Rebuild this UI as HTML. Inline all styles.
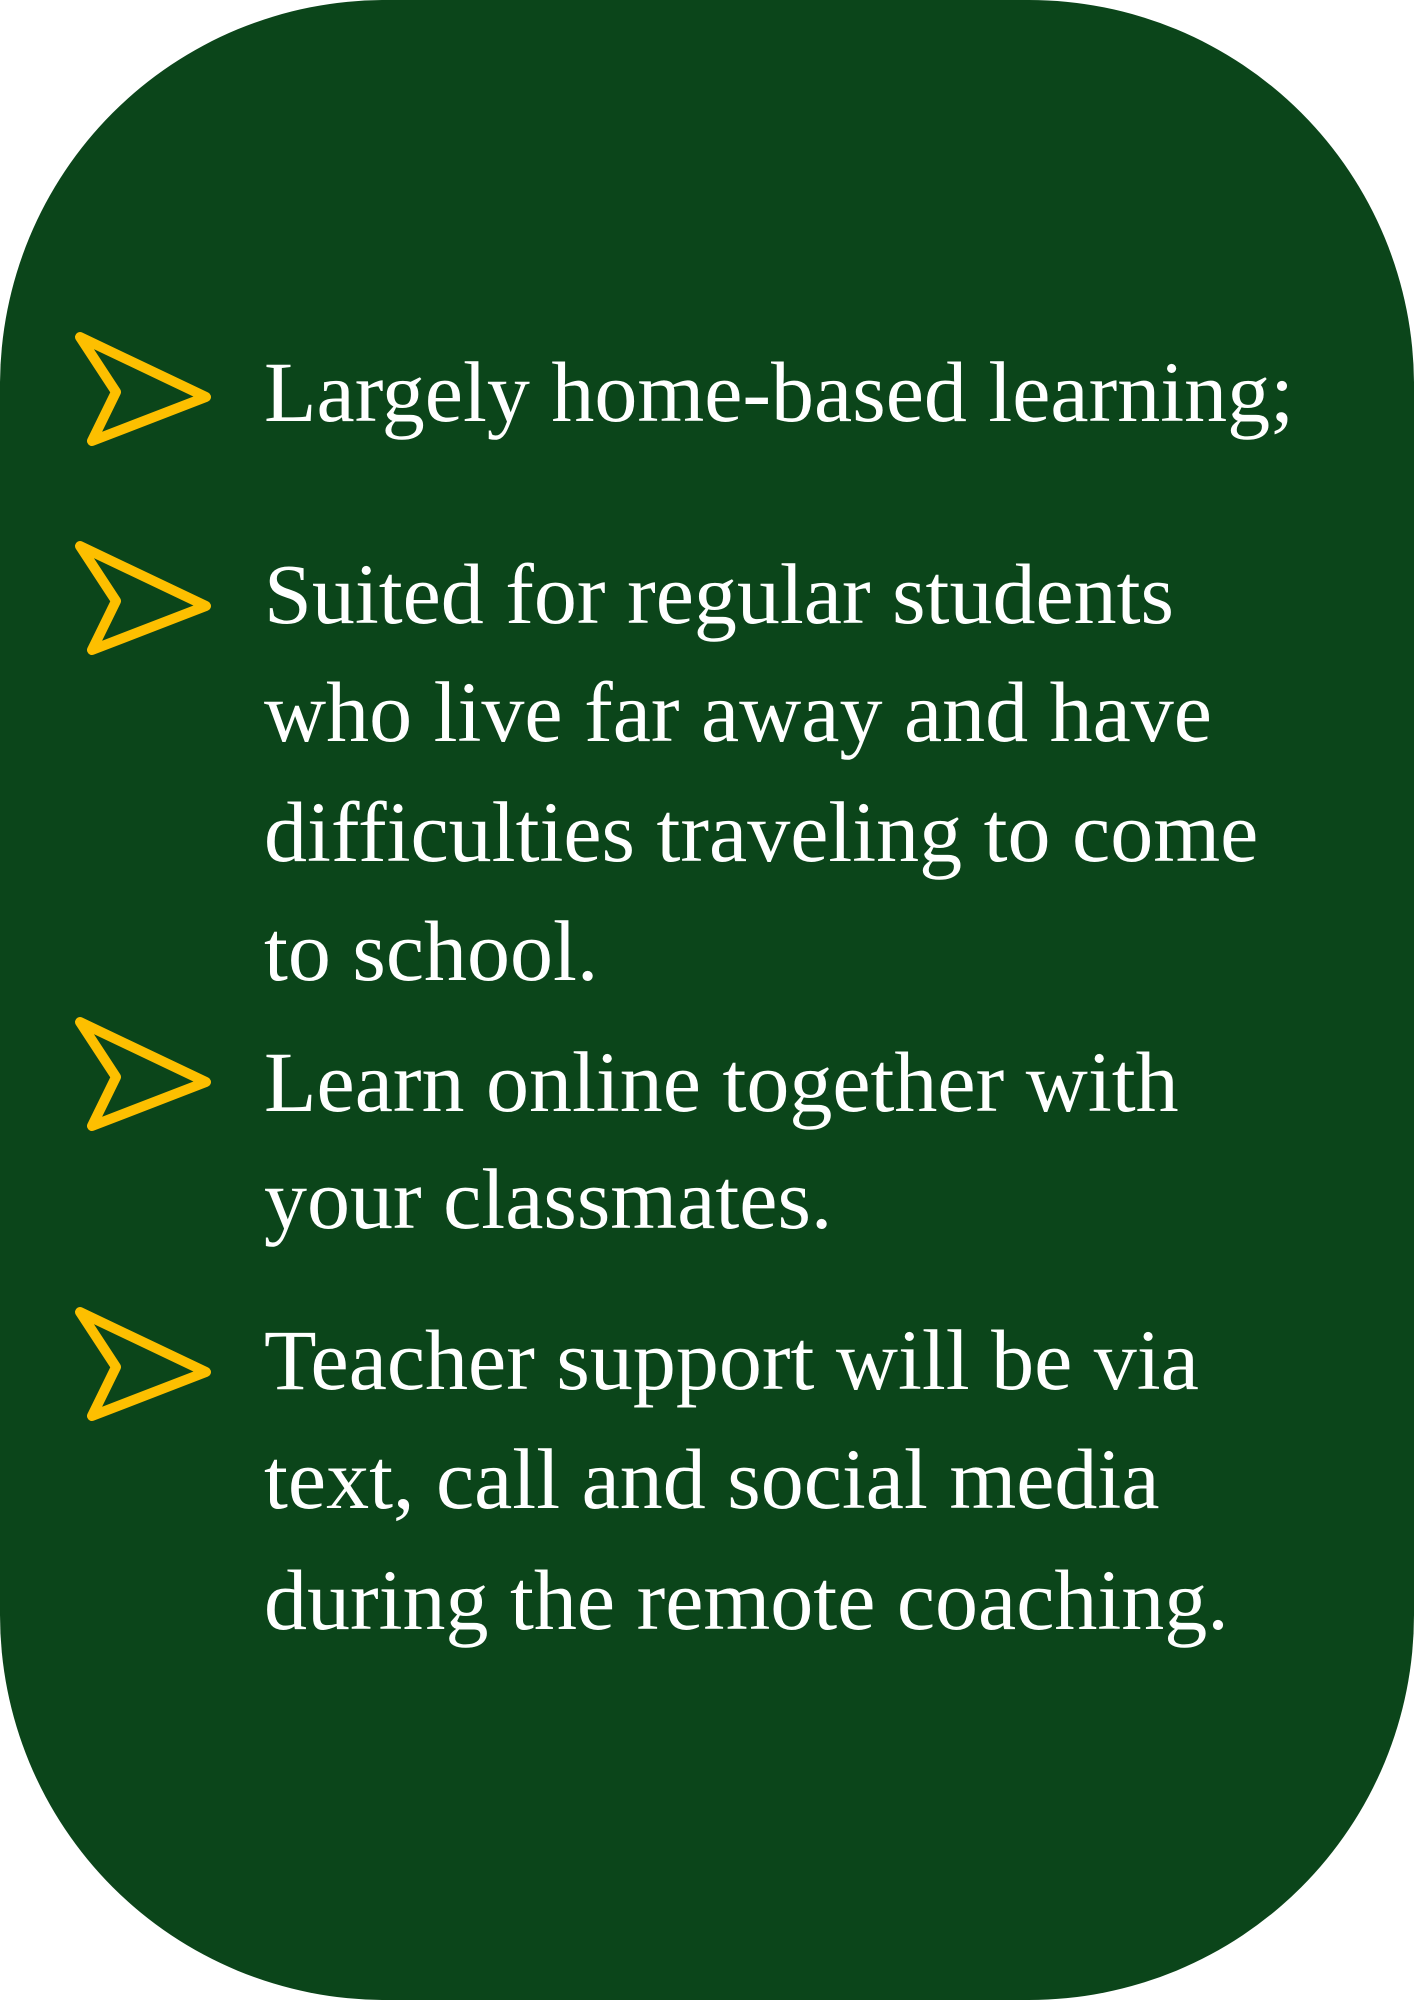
<!DOCTYPE html>
<html><head><meta charset="utf-8"><style>
html,body{margin:0;padding:0;background:#fff;}
body{width:1414px;height:2000px;position:relative;overflow:hidden;}
.card{position:absolute;left:0;top:0;width:1414px;height:2000px;background:#0b451a;border-radius:385px;}
.l{position:absolute;left:264px;font-family:"Liberation Serif",serif;font-size:86px;line-height:119px;color:#fff;white-space:nowrap;}
</style></head><body>
<div class="card"></div>
<svg style="position:absolute;left:0;top:0" width="1414" height="2000">
<defs><path id="ar" d="M0 0 L126 60 L12 104 L36 55 Z" fill="none" stroke="#fdbf00" stroke-width="10" stroke-linejoin="round" stroke-linecap="round"/></defs>
<use href="#ar" x="80" y="337"/>
<use href="#ar" x="80" y="546"/>
<use href="#ar" x="80" y="1022"/>
<use href="#ar" x="80" y="1312"/>
</svg>
<div class="l" style="top:333px">Largely home-based learning;</div>
<div class="l" style="top:535px">Suited for regular students</div>
<div class="l" style="top:653px">who live far away and have</div>
<div class="l" style="top:773px">difficulties traveling to come</div>
<div class="l" style="top:892px">to school.</div>
<div class="l" style="top:1023px">Learn online together with</div>
<div class="l" style="top:1140px">your classmates.</div>
<div class="l" style="top:1301px">Teacher support will be via</div>
<div class="l" style="top:1420px">text, call and social media</div>
<div class="l" style="top:1541px">during the remote coaching.</div>
</body></html>
